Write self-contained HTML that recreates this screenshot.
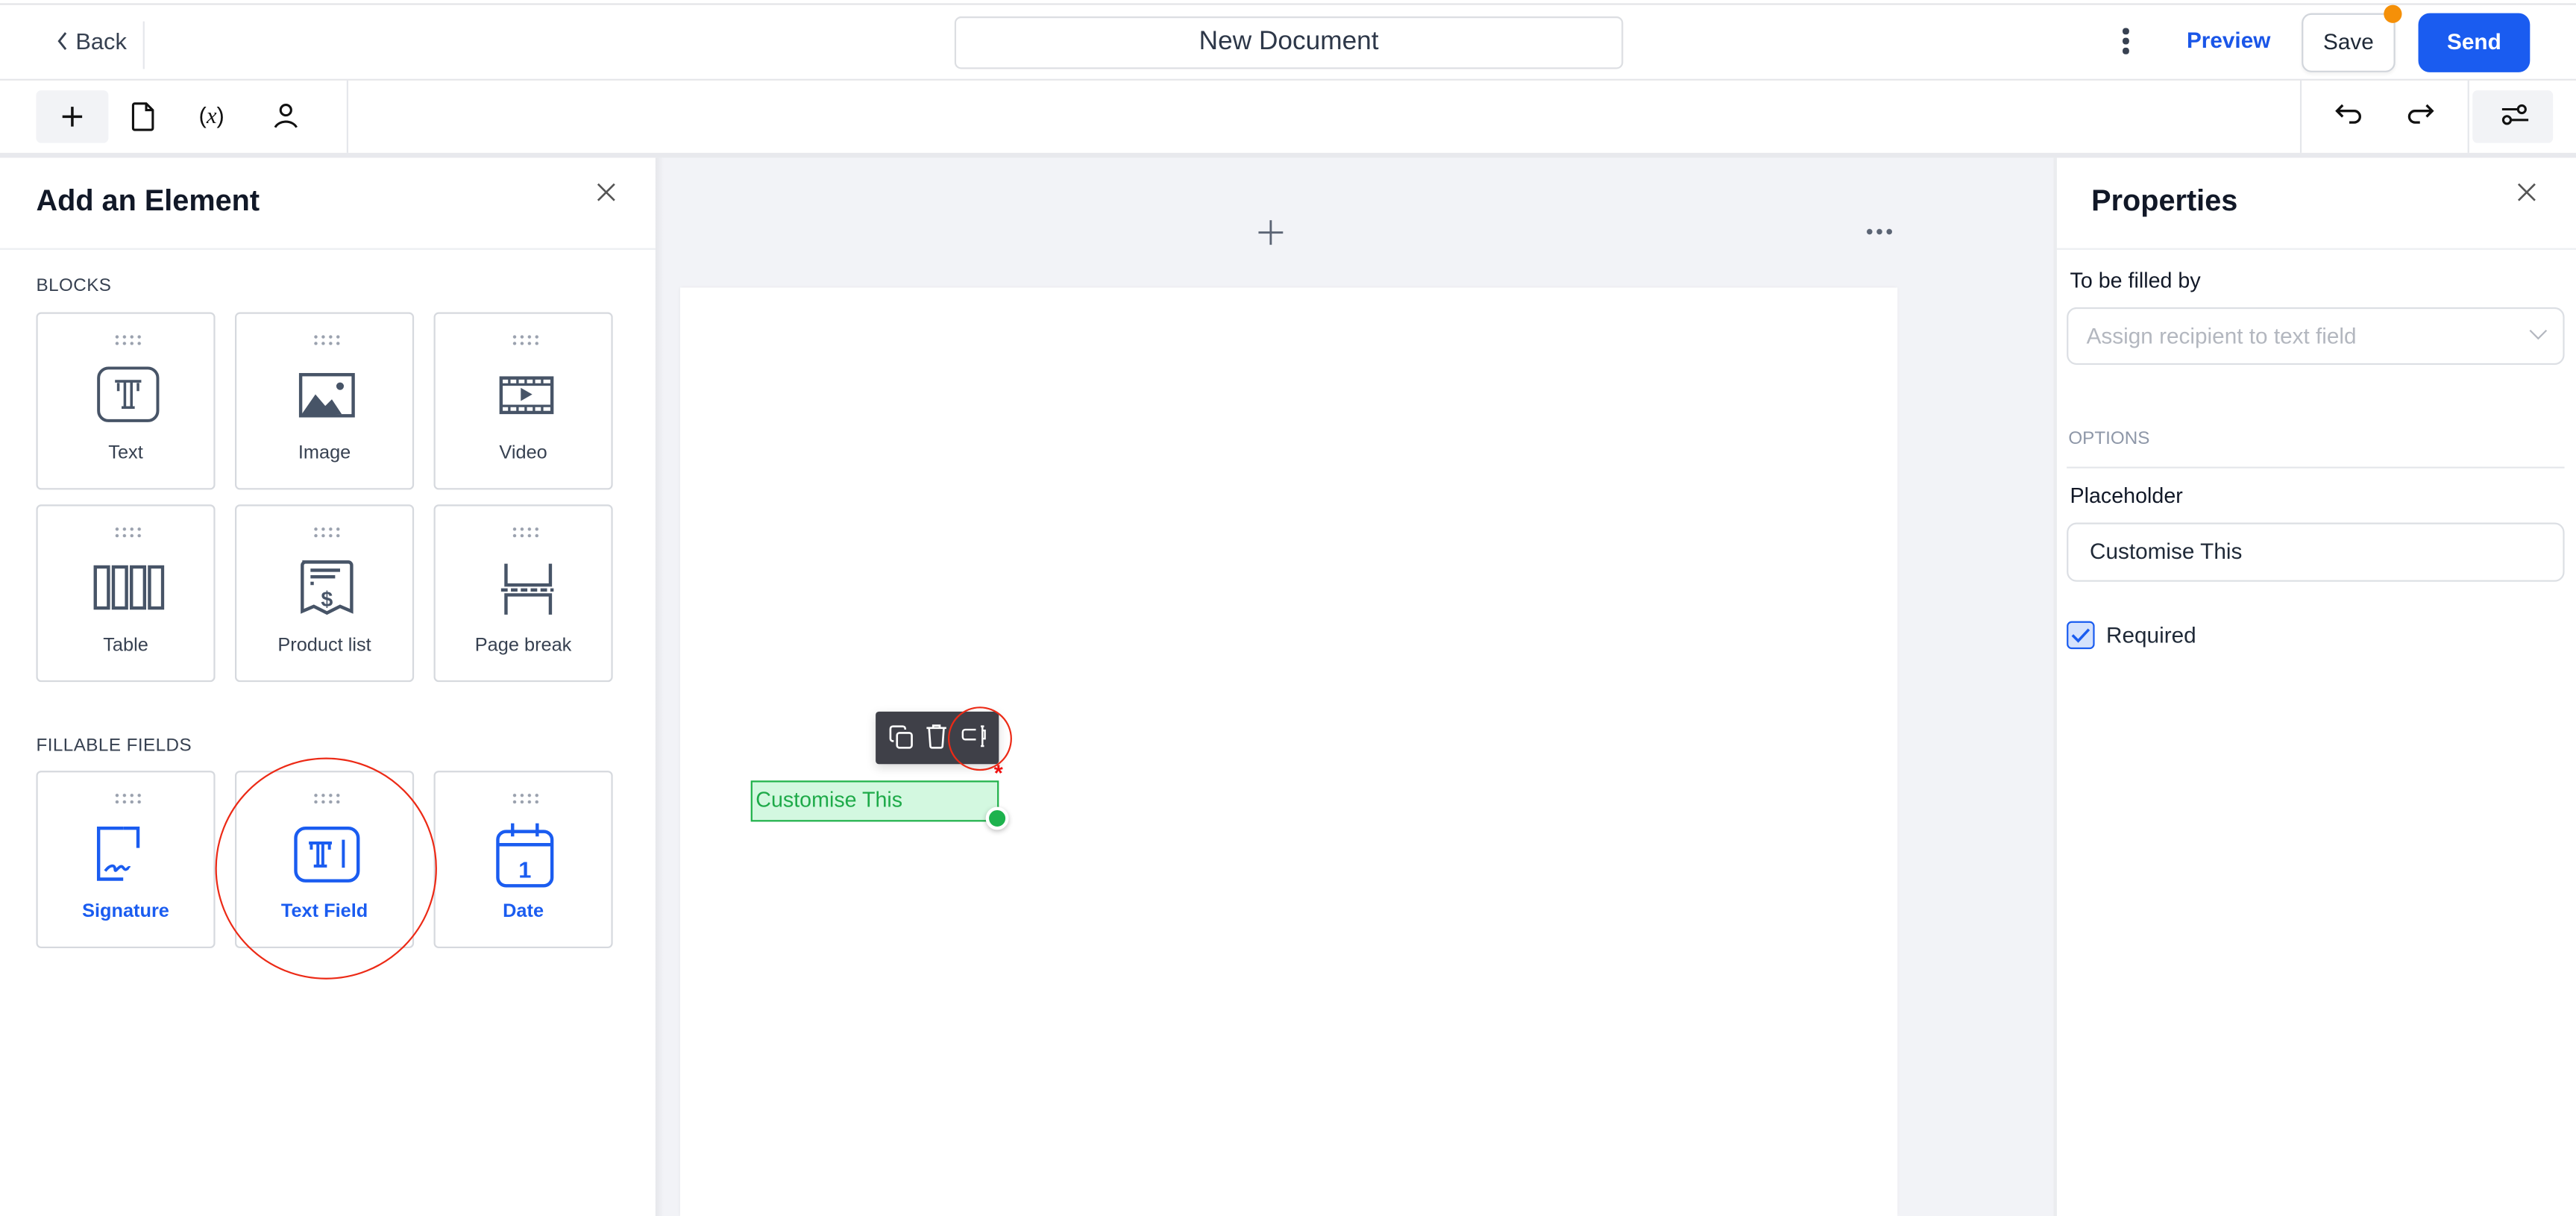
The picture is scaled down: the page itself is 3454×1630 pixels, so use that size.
<!DOCTYPE html>
<html><head><meta charset="utf-8"><style>
*{box-sizing:border-box;margin:0;padding:0}
html,body{width:3454px;height:1628px;overflow:hidden;background:#fff;font-family:"Liberation Sans",sans-serif}
#s{position:absolute;left:0;top:0;width:1568px;height:739.1px;transform:scale(2.20281);transform-origin:0 0;color:#1f2937}
.a{position:absolute}
.card{position:absolute;width:109px;height:108px;border:1px solid #d6d9de;border-radius:3px;background:#fff}
.card .dots{position:absolute;left:46px;top:12px;width:18px;height:7px;background-image:radial-gradient(circle,#9aa1ae 0.9px,transparent 1.1px);background-size:4.5px 4px}
.card .lbl{position:absolute;left:0;right:0;top:79px;text-align:center;font-size:11.5px;color:#374151}
.card.f .lbl{color:#1a5cf0;font-weight:bold}
.card svg{position:absolute;left:34px;top:32px}
.sec{font-size:11px;color:#374151;letter-spacing:.2px}
</style></head><body><div id="s">
<!-- header -->
<div class="a" style="left:0;top:2px;width:1568px;height:1px;background:#e3e4e7"></div>
<div class="a" style="left:0;top:48px;width:1568px;height:1px;background:#e6e7ea"></div>
<svg class="a" style="left:34px;top:19px" width="8" height="12" viewBox="0 0 8 12"><path d="M6 1L2 6l4 5" fill="none" stroke="#374151" stroke-width="1.3"/></svg>
<div class="a" style="left:46px;top:17px;font-size:14px;color:#374151">Back</div>
<div class="a" style="left:87px;top:13px;width:1px;height:29px;background:#e5e7eb"></div>
<div class="a" style="left:581px;top:10px;width:407px;height:32px;border:1px solid #dcdee2;border-radius:4px;text-align:center;line-height:30px;font-size:16px;color:#2d3748">New Document</div>
<div class="a" style="left:1292px;top:17px;width:4px">
<div style="width:3.5px;height:3.5px;border-radius:50%;background:#374151;margin-bottom:2.5px"></div><div style="width:3.5px;height:3.5px;border-radius:50%;background:#374151;margin-bottom:2.5px"></div><div style="width:3.5px;height:3.5px;border-radius:50%;background:#374151"></div></div>
<div class="a" style="left:1331px;top:17px;font-size:13.5px;color:#1a56e8;font-weight:bold">Preview</div>
<div class="a" style="left:1401px;top:8px;width:57px;height:36px;border:1px solid #d1d5db;border-radius:6px;text-align:center;line-height:34px;font-size:13.5px;color:#1f2937;box-shadow:0 1px 2px rgba(0,0,0,.06)">Save</div>
<div class="a" style="left:1451px;top:3px;width:11px;height:11px;border-radius:50%;background:#f59008"></div>
<div class="a" style="left:1472px;top:8px;width:68px;height:36px;border-radius:7px;background:#1a5cf0;color:#fff;text-align:center;line-height:36px;font-size:13.5px;font-weight:bold">Send</div>
<!-- toolbar -->
<div class="a" style="left:0;top:93px;width:1568px;height:2.5px;background:#e8e9ed"></div>
<div class="a" style="left:22px;top:55px;width:44px;height:32px;background:#f2f3f6;border-radius:3px"></div>
<svg class="a" style="left:37px;top:64px" width="14" height="14" viewBox="0 0 14 14"><path d="M7 1v12M1 7h12" stroke="#111" stroke-width="1.6"/></svg>
<svg class="a" style="left:80px;top:62px" width="14" height="18" viewBox="0 0 14 18"><path d="M2 1h7l4 4v11a1 1 0 0 1-1 1H2a1 1 0 0 1-1-1V2a1 1 0 0 1 1-1zM9 1v4h4" fill="none" stroke="#111" stroke-width="1.4"/></svg>
<div class="a" style="left:121px;top:62px;font-size:14px;color:#111;font-family:'Liberation Sans',sans-serif">(<i style="font-family:'Liberation Serif',serif">x</i>)</div>
<svg class="a" style="left:166px;top:62px" width="16" height="16" viewBox="0 0 16 16"><circle cx="8" cy="5" r="3.2" fill="none" stroke="#111" stroke-width="1.4"/><path d="M1.5 15.5a7 5.5 0 0 1 13 0" fill="none" stroke="#111" stroke-width="1.4"/></svg>
<div class="a" style="left:211px;top:49px;width:1px;height:44px;background:#e5e7eb"></div>
<div class="a" style="left:1400px;top:49px;width:1px;height:44px;background:#e5e7eb"></div>
<div class="a" style="left:1502px;top:49px;width:1px;height:44px;background:#e5e7eb"></div>
<svg class="a" style="left:1421px;top:62px" width="18" height="16" viewBox="0 0 18 16"><path d="M5 2L1.5 5.5 5 9M1.5 5.5H12a3.5 3.5 0 0 1 0 7H9" fill="none" stroke="#111" stroke-width="1.5"/></svg>
<svg class="a" style="left:1464px;top:62px" width="18" height="16" viewBox="0 0 18 16"><path d="M13 2l3.5 3.5L13 9M16.5 5.5H6a3.5 3.5 0 0 0 0 7h3" fill="none" stroke="#111" stroke-width="1.5"/></svg>
<div class="a" style="left:1505px;top:55px;width:49px;height:32px;background:#f2f3f6;border-radius:3px"></div>
<svg class="a" style="left:1522px;top:62px" width="18" height="16" viewBox="0 0 18 16"><circle cx="13" cy="4.5" r="2.3" fill="none" stroke="#111" stroke-width="1.4"/><circle cx="4" cy="11" r="2.3" fill="none" stroke="#111" stroke-width="1.4"/><path d="M1 4.5h9.7M6.3 11H17" stroke="#111" stroke-width="1.4"/></svg>
<!-- canvas -->
<div class="a" style="left:399px;top:95.5px;width:852px;height:644px;background:#f2f3f7"></div>
<div class="a" style="left:399px;top:95.5px;width:5px;height:644px;background:linear-gradient(90deg,#e6e7eb,#f2f3f7)"></div>
<svg class="a" style="left:766px;top:134px" width="15" height="15" viewBox="0 0 15 15"><path d="M7.5 0v15M0 7.5h15" stroke="#5b6474" stroke-width="1.3"/></svg>
<div class="a" style="left:1135px;top:139px;width:18px;height:4px;background-image:radial-gradient(circle,#5b6474 1.6px,transparent 1.8px);background-size:6px 4px"></div>
<div class="a" style="left:414px;top:175px;width:741px;height:565px;background:#fff;box-shadow:0 0 2px rgba(0,0,0,.06)"></div>
<div class="a" style="left:533px;top:433px;width:75px;height:32px;background:#3f4048;border-radius:2px;box-shadow:0 2px 6px rgba(0,0,0,.15)"></div>
<svg class="a" style="left:541px;top:441px" width="15" height="15" viewBox="0 0 15 15"><path d="M3 10H2.5A1.5 1.5 0 0 1 1 8.5v-6A1.5 1.5 0 0 1 2.5 1h6A1.5 1.5 0 0 1 10 2.5V3" fill="none" stroke="#fff" stroke-width="1.2"/><rect x="5" y="5" width="9" height="9" rx="1.5" fill="none" stroke="#fff" stroke-width="1.2"/></svg>
<svg class="a" style="left:563px;top:440px" width="14" height="16" viewBox="0 0 14 16"><path d="M1 3h12M5 3V1.5h4V3M2.5 3l.8 11a1 1 0 0 0 1 1h5.4a1 1 0 0 0 1-1l.8-11" fill="none" stroke="#fff" stroke-width="1.2"/></svg>
<svg class="a" style="left:585px;top:441px" width="16" height="14" viewBox="0 0 16 14"><path d="M9 3H2.5A1.5 1.5 0 0 0 1 4.5v3A1.5 1.5 0 0 0 2.5 9H9M12 1h2M12 13h2M13 1v12M13 3.5h1.5v5H13" fill="none" stroke="#fff" stroke-width="1.1"/></svg>
<div class="a" style="left:577px;top:430px;width:39px;height:39px;border:1.4px solid #ec2a16;border-radius:50%"></div>
<div class="a" style="left:457px;top:475px;width:151px;height:25px;border:1.3px solid #20b14a;background:#d3f8e0;font-size:13px;color:#1eaa49;padding:3px 0 0 2px">Customise This</div>
<div class="a" style="left:605px;top:462px;font-size:14px;font-weight:bold;color:#f01010">*</div>
<div class="a" style="left:600px;top:491px;width:14px;height:14px;border-radius:50%;background:#1db24d;border:2.5px solid #fff;box-shadow:0 1px 3px rgba(0,0,0,.25)"></div>
<!-- left panel -->
<div class="a" style="left:22px;top:112px;font-size:18px;font-weight:bold;color:#111827">Add an Element</div>
<svg class="a" style="left:363px;top:111px" width="12" height="12" viewBox="0 0 12 12"><path d="M1 1l10 10M11 1L1 11" stroke="#555" stroke-width="1.2"/></svg>
<div class="a" style="left:0;top:151px;width:399px;height:1px;background:#eceef1"></div>
<div class="a sec" style="left:22px;top:168px">BLOCKS</div>
<div class="card" style="left:22px;top:190px"><div class="dots"></div>
<svg width="42" height="36" viewBox="0 0 42 36" style="left:34px;top:31px"><rect x="3" y="2" width="36" height="32" rx="6" fill="none" stroke="#475467" stroke-width="1.8"/><path d="M13 10h16M15 11v5M27 11v5M19 10v16M23 10v16M17 26h8" fill="none" stroke="#475467" stroke-width="1.6"/></svg>
<div class="lbl">Text</div></div>
<div class="card" style="left:143px;top:190px"><div class="dots"></div>
<svg width="42" height="36" viewBox="0 0 42 36" style="left:34px;top:31px"><rect x="5" y="6" width="32" height="25" fill="none" stroke="#475467" stroke-width="2"/><path d="M5 31l9-13 6 7 4-4 6 9z" fill="#475467"/><circle cx="29" cy="13" r="2.3" fill="#475467"/></svg>
<div class="lbl">Image</div></div>
<div class="card" style="left:264px;top:190px"><div class="dots"></div>
<svg width="42" height="36" viewBox="0 0 42 36" style="left:34px;top:31px"><rect x="6" y="8" width="31" height="21" fill="none" stroke="#475467" stroke-width="2"/><path d="M6 12h31M6 25h31M11 8v4M16 8v4M21 8v4M26 8v4M31 8v4M11 25v4M16 25v4M21 25v4M26 25v4M31 25v4" stroke="#475467" stroke-width="1.5"/><path d="M18 14v8l7-4z" fill="#475467"/></svg>
<div class="lbl">Video</div></div>
<div class="card" style="left:22px;top:307px"><div class="dots"></div>
<svg width="44" height="36" viewBox="0 0 44 36" style="left:33px;top:31px"><rect x="2" y="6" width="8" height="25" fill="none" stroke="#475467" stroke-width="2"/><rect x="13" y="6" width="8" height="25" fill="none" stroke="#475467" stroke-width="2"/><rect x="24" y="6" width="8" height="25" fill="none" stroke="#475467" stroke-width="2"/><rect x="35" y="6" width="8" height="25" fill="none" stroke="#475467" stroke-width="2"/></svg>
<div class="lbl">Table</div></div>
<div class="card" style="left:143px;top:307px"><div class="dots"></div>
<svg width="42" height="38" viewBox="0 0 42 38" style="left:34px;top:30px"><path d="M6 4h28a2 2 0 0 1 2 2v28l-7-3-8 4-8-4-7 3V6a2 2 0 0 1 2-2z" fill="none" stroke="#475467" stroke-width="2"/><path d="M11 9h18M11 13h15M11 17h2" stroke="#475467" stroke-width="2"/><text x="21" y="31" font-size="13" font-weight="bold" fill="#475467" text-anchor="middle" font-family="Liberation Sans">$</text></svg>
<div class="lbl">Product list</div></div>
<div class="card" style="left:264px;top:307px"><div class="dots"></div>
<svg width="42" height="38" viewBox="0 0 42 38" style="left:34px;top:31px"><path d="M9 4v13h27V4M9 35V23h27v12" fill="none" stroke="#475467" stroke-width="2"/><path d="M6 20h32" stroke="#475467" stroke-width="2" stroke-dasharray="4 2"/></svg>
<div class="lbl">Page break</div></div>
<div class="a sec" style="left:22px;top:448px">FILLABLE FIELDS</div>
<div class="card f" style="left:22px;top:469px"><div class="dots"></div>
<svg width="42" height="38" viewBox="0 0 42 38" style="left:33px;top:31px"><path d="M19 3H4v31h15" fill="none" stroke="#1a5cf0" stroke-width="2"/><path d="M19 3h9v12" fill="none" stroke="#1a5cf0" stroke-width="2"/><path d="M8 29c3-4 6-4 6-1s3-4 5-1 3-1 4 0" fill="none" stroke="#1a5cf0" stroke-width="1.7"/></svg>
<div class="lbl">Signature</div></div>
<div class="card f" style="left:143px;top:469px"><div class="dots"></div>
<svg width="44" height="38" viewBox="0 0 44 38" style="left:33px;top:31px"><rect x="3" y="3" width="38" height="32" rx="6" fill="none" stroke="#1a5cf0" stroke-width="2"/><path d="M11 12h14M12.5 12v4M23.5 12v4M16.5 12v14M19.5 12v14M14 26h8M32 10v17" fill="none" stroke="#1a5cf0" stroke-width="1.8"/></svg>
<div class="lbl">Text Field</div></div>
<div class="card f" style="left:264px;top:469px"><div class="dots"></div>
<svg width="44" height="44" viewBox="0 0 44 44" style="left:33px;top:28px"><rect x="5" y="8" width="33" height="33" rx="5" fill="none" stroke="#1a5cf0" stroke-width="2"/><path d="M5 16h33M14 3v8M29 3v8" stroke="#1a5cf0" stroke-width="2"/><text x="21.5" y="36" font-size="14" font-weight="bold" fill="#1a5cf0" text-anchor="middle" font-family="Liberation Sans">1</text></svg>
<div class="lbl">Date</div></div>
<div class="a" style="left:131px;top:461px;width:135px;height:135px;border:1.4px solid #ec2a16;border-radius:50%"></div>
<!-- right panel -->
<div class="a" style="left:1250px;top:95.5px;width:2px;height:644px;background:#ebecef"></div>
<div class="a" style="left:1273px;top:112px;font-size:18px;font-weight:bold;color:#111827">Properties</div>
<svg class="a" style="left:1532px;top:111px" width="12" height="12" viewBox="0 0 12 12"><path d="M1 1l10 10M11 1L1 11" stroke="#555" stroke-width="1.2"/></svg>
<div class="a" style="left:1252px;top:151px;width:316px;height:1px;background:#eceef1"></div>
<div class="a" style="left:1260px;top:163px;font-size:13px;color:#111827">To be filled by</div>
<div class="a" style="left:1258px;top:187px;width:303px;height:35px;border:1px solid #dcdfe4;border-radius:6px;font-size:13.5px;color:#b3b7bf;padding:9px 0 0 11px">Assign recipient to text field</div>
<svg class="a" style="left:1539px;top:200px" width="12" height="8" viewBox="0 0 12 8"><path d="M1 1l5 5 5-5" fill="none" stroke="#b3b7bf" stroke-width="1"/></svg>
<div class="a" style="left:1259px;top:261px;font-size:11px;color:#8e97a8">OPTIONS</div>
<div class="a" style="left:1258px;top:284px;width:303px;height:1px;background:#e5e7eb"></div>
<div class="a" style="left:1260px;top:294px;font-size:13px;color:#111827">Placeholder</div>
<div class="a" style="left:1258px;top:318px;width:303px;height:36px;border:1px solid #dcdfe4;border-radius:6px;font-size:13.5px;color:#1f2937;padding:9px 0 0 13px">Customise This</div>
<div class="a" style="left:1258px;top:378px;width:17px;height:17px;border:1.3px solid #1a5cf0;border-radius:3px;background:#d5e2fc"></div>
<svg class="a" style="left:1260px;top:381px" width="13" height="11" viewBox="0 0 13 11"><path d="M1.5 5.5l3.5 3.5 6.5-7" fill="none" stroke="#1a5cf0" stroke-width="1.6"/></svg>
<div class="a" style="left:1282px;top:379px;font-size:13.5px;color:#1f2937">Required</div>
</div></body></html>
